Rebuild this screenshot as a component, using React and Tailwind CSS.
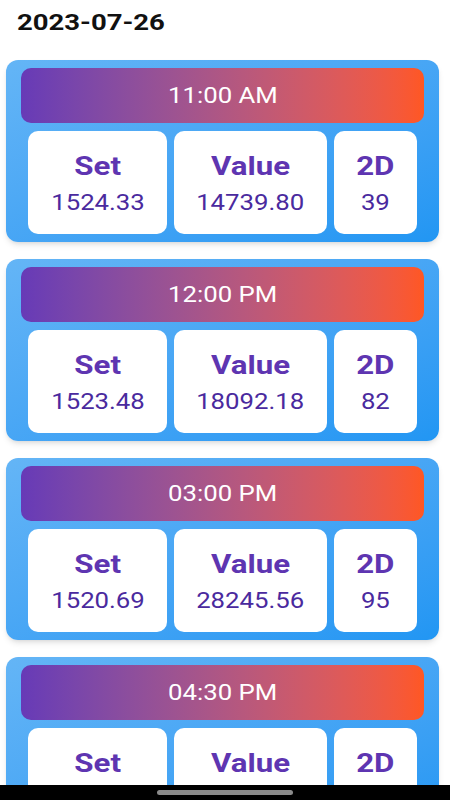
import React from "react";

const rows = [
  { time: "11:00 AM", set: "1524.33", value: "14739.80", twoD: "39" },
  { time: "12:00 PM", set: "1523.48", value: "18092.18", twoD: "82" },
  { time: "03:00 PM", set: "1520.69", value: "28245.56", twoD: "95" },
  { time: "04:30 PM", set: "1518.20", value: "31007.45", twoD: "05" },
];

function Cell({ label, value, width }) {
  return (
    <div className={`${width} h-[103px] bg-white rounded-[10px] flex flex-col items-center pt-[23px]`}>
      <span className="inline-block scale-x-125 text-[25px] leading-[25px] font-bold text-[#5e35b1]">{label}</span>
      <span className="inline-block scale-x-[1.17] mt-[13px] text-[22px] leading-[22px] text-[#4a2a9e]">{value}</span>
    </div>
  );
}

function ResultCard({ r }) {
  return (
    <div className="ml-[6px] mr-[11px] h-[182px] rounded-[12px] bg-linear-to-br from-[#64b5f6] to-[#2196f3] shadow-md px-[15px] pt-[8px]">
      <div className="h-[55px] rounded-[10px] bg-linear-to-r from-[#673ab7] to-[#ff5722] flex items-center justify-center">
        <span className="inline-block scale-x-[1.17] text-white text-[22px] leading-[22px]">{r.time}</span>
      </div>
      <div className="mt-[8px] mx-[7px] flex gap-[7px]">
        <Cell label="Set" value={r.set} width="w-[139px]" />
        <Cell label="Value" value={r.value} width="w-[153px]" />
        <Cell label="2D" value={r.twoD} width="w-[83px]" />
      </div>
    </div>
  );
}

export default function App() {
  return (
    <div className="min-h-screen bg-white font-['Roboto',sans-serif]">
      <div className="pt-[12px] pl-[17px] flex">
        <h1 className="origin-left scale-x-125 text-[22px] leading-[22px] font-bold text-[#111]">2023-07-26</h1>
      </div>
      <div className="mt-[26px] flex flex-col gap-[17px] pb-10">
        {rows.map((r) => (
          <ResultCard key={r.time} r={r} />
        ))}
      </div>
      <div className="fixed bottom-0 left-0 right-0 h-[15px] bg-black flex items-center justify-center">
        <div className="w-[136px] h-[5px] rounded-full bg-[#8a8a8a]" />
      </div>
    </div>
  );
}
